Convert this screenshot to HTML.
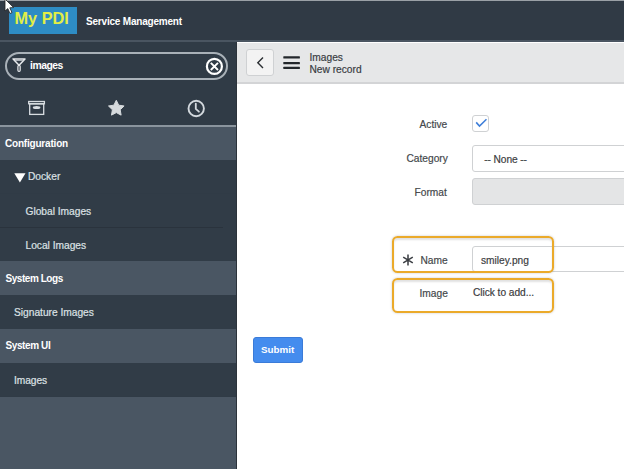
<!DOCTYPE html>
<html><head><meta charset="utf-8">
<style>
*{margin:0;padding:0;box-sizing:border-box}
html,body{width:624px;height:469px;overflow:hidden;background:#fff;font-family:"Liberation Sans",sans-serif}
.abs{position:absolute}
#top{left:0;top:0;width:624px;height:42px;background:#303a45}
#topline{left:0;top:0;width:624px;height:1px;background:#9aa0a6}
#hdrline{left:0;top:40px;width:624px;height:2px;background:#4a5561}
#logo{left:9px;top:7px;width:68px;height:27px;background:#2e8cc4}
#logotxt{left:14.5px;top:7px;font-size:16.3px;font-weight:bold;color:#e2ee45;line-height:22px;white-space:nowrap}
#svc{left:86px;top:15px;font-size:10px;font-weight:bold;color:#fff;line-height:14px;white-space:nowrap;letter-spacing:-0.2px}
#side{left:0;top:42px;width:237px;height:427px;background:#303b46}
#pill{left:5px;top:52px;width:223px;height:28px;border:2px solid #a9b1b8;border-radius:14px}
.srow{left:0;width:236px;height:34px}
.hdr{background:#4a5663;color:#fff;font-weight:bold;font-size:10px}
.mod{background:#313c47;color:#dde1e5;font-size:10.2px;-webkit-text-stroke:0.2px #dde1e5}
.t{position:absolute;white-space:nowrap;line-height:12px}
#sidebottom{left:0;top:396.5px;width:236px;height:73px;background:#4a5663}
#sideborder{left:235.5px;top:42px;width:1.5px;height:427px;background:#2c333b}
#main{left:237px;top:42px;width:387px;height:427px;background:#fff}
#mhdr{left:237px;top:42.5px;width:387px;height:41.3px;background:#e6e7e8;border-bottom:2px solid #d3d4d6}
#back{left:246px;top:49px;width:27.5px;height:26.5px;background:#f3f3f3;border:1px solid #cfd1d3;border-radius:3px}
.lbl{position:absolute;white-space:nowrap;color:#3c3f44;font-size:10.2px;line-height:12px;-webkit-text-stroke:0.2px #55595e}
.box{position:absolute;border:1px solid #cfd1d3;border-radius:3px;background:#fff}
.orange{position:absolute;border:2.8px solid #ebaa2a;border-radius:5.5px;box-shadow:0 0 2.5px rgba(0,0,0,.22), inset 0 2px 2px rgba(0,0,0,.12)}
#submit{left:253px;top:337px;width:50px;height:26px;background:#448cee;border:1px solid #3a7bd8;border-radius:3px}
</style></head><body>
<div class="abs" id="top"></div>
<div class="abs" id="topline"></div>
<div class="abs" id="hdrline"></div>
<div class="abs" id="logo"></div>
<div class="abs" id="logotxt">My PDI</div>
<div class="abs" id="svc">Service Management</div>

<div class="abs" id="side"></div>
<div class="abs" id="pill"></div>
<svg class="abs" style="left:8px;top:54px" width="22" height="22" viewBox="0 0 22 22">
  <path d="M5.1 4.9 H17 L11.05 11.3 Z" fill="none" stroke="#e6e9ec" stroke-width="1.5" stroke-linejoin="round"/>
  <path d="M6.8 6.3 H15.4" stroke="#c9ced3" stroke-width="1"/>
  <rect x="9.9" y="11.4" width="2.3" height="5.9" rx="1.1" fill="none" stroke="#e6e9ec" stroke-width="1.2"/>
</svg>
<div class="abs t" style="left:30px;top:60px;font-size:10.4px;color:#fff;font-weight:bold;letter-spacing:-0.5px">images</div>
<svg class="abs" style="left:204px;top:56px" width="21" height="21" viewBox="0 0 21 21">
  <circle cx="10.4" cy="10.4" r="7.5" fill="none" stroke="#fff" stroke-width="2.2"/>
  <path d="M6.8 6.8 L14 14 M14 6.8 L6.8 14" stroke="#fff" stroke-width="1.9"/>
</svg>
<!-- tab icons -->
<svg class="abs" style="left:27px;top:99px" width="20" height="18" viewBox="0 0 20 18">
  <rect x="1.7" y="2.5" width="15.7" height="2.3" fill="none" stroke="#d8dde1" stroke-width="1.3"/>
  <rect x="2.7" y="4.8" width="14" height="10.6" fill="none" stroke="#d8dde1" stroke-width="1.3"/>
  <ellipse cx="9.6" cy="8.6" rx="3.8" ry="1.5" fill="#d8dde1"/>
</svg>
<svg class="abs" style="left:107px;top:99px" width="19" height="19" viewBox="0 0 19 19">
  <path d="M9.30 1.30 L11.71 6.18 L17.10 6.97 L13.20 10.77 L14.12 16.13 L9.30 13.60 L4.48 16.13 L5.40 10.77 L1.50 6.97 L6.89 6.18 Z" fill="#d6dadd" stroke="#d6dadd" stroke-width="1" stroke-linejoin="round"/>
</svg>
<svg class="abs" style="left:186px;top:98px" width="20" height="20" viewBox="0 0 20 20">
  <circle cx="10.2" cy="10.5" r="7.7" fill="none" stroke="#d3d9de" stroke-width="1.9"/>
  <path d="M9.8 5.6 V10.9 L12.9 13.7" fill="none" stroke="#d3d9de" stroke-width="1.8" stroke-linecap="round"/>
</svg>
<div class="abs" style="left:0;top:125px;width:236px;height:2px;background:#8a949d"></div>

<div class="abs srow hdr" style="top:127px;height:32.60px"><span class="t" style="left:5px;top:11.1px;letter-spacing:-0.2px">Configuration</span></div>
<div class="abs srow mod" style="top:159.6px;height:33.90px"><svg class="abs" style="left:13.5px;top:13.4px" width="12" height="10" viewBox="0 0 12 10"><path d="M0.3 0.3 H11.5 L5.9 9.5 Z" fill="#fff"/></svg><span class="t" style="left:28px;top:11.7px;letter-spacing:0px">Docker</span></div>
<div class="abs srow mod" style="top:193.5px;height:33.90px"><span class="t" style="left:25.5px;top:12.4px;letter-spacing:0px">Global Images</span></div>
<div class="abs srow mod" style="top:227.4px;height:33.90px"><span class="t" style="left:25.5px;top:12.3px;letter-spacing:0px">Local Images</span></div>
<div class="abs srow hdr" style="top:261.3px;height:33.50px"><span class="t" style="left:5.5px;top:11.8px;letter-spacing:-0.45px">System Logs</span></div>
<div class="abs srow mod" style="top:294.8px;height:33.80px"><span class="t" style="left:14px;top:12.2px;letter-spacing:0px">Signature Images</span></div>
<div class="abs srow hdr" style="top:328.6px;height:34.20px"><span class="t" style="left:5.5px;top:11.6px;letter-spacing:-0.4px">System UI</span></div>
<div class="abs srow mod" style="top:362.8px;height:33.70px"><span class="t" style="left:14px;top:12.2px;letter-spacing:-0.05px">Images</span></div>
<div class="abs" id="sidebottom"></div>
<div class="abs" style="left:0;top:226.5px;width:223px;height:1px;background:#2a333d"></div>
<div class="abs" id="sideborder"></div>

<div class="abs" id="main"></div>
<div class="abs" id="mhdr"></div>
<div class="abs" id="back"></div>
<svg class="abs" style="left:254px;top:56px" width="14" height="14" viewBox="0 0 14 14"><path d="M9 1.4 L3.8 6.7 L9 12" fill="none" stroke="#2b2f33" stroke-width="1.4"/></svg>
<svg class="abs" style="left:283px;top:55px" width="18" height="15" viewBox="0 0 18 15">
  <rect x="0.3" y="1.2" width="16.6" height="2.4" rx="0.6" fill="#23272b"/>
  <rect x="0.3" y="6.9" width="16.6" height="2.4" rx="0.6" fill="#23272b"/>
  <rect x="0.3" y="11.7" width="16.6" height="2.4" rx="0.6" fill="#23272b"/>
</svg>
<div class="abs lbl" style="left:309.5px;top:51.8px;color:#2f3236">Images</div>
<div class="abs lbl" style="left:309.5px;top:63.5px;color:#2f3236">New record</div>

<div class="abs lbl" style="left:419.5px;top:119.3px">Active</div>
<div class="abs box" style="left:472px;top:115px;width:17px;height:17px"></div>
<svg class="abs" style="left:474px;top:117px" width="13" height="13" viewBox="0 0 13 13"><path d="M2.2 5.4 L5.5 9 L12.5 2.2" fill="none" stroke="#3f7fd9" stroke-width="1.6"/></svg>

<div class="abs lbl" style="left:406.5px;top:153px">Category</div>
<div class="abs box" style="left:472px;top:145px;width:170px;height:27px"></div>
<div class="abs lbl" style="left:484.3px;top:153.5px;color:#333;letter-spacing:-0.1px">-- None --</div>

<div class="abs lbl" style="left:414.5px;top:187px">Format</div>
<div class="abs box" style="left:472px;top:178px;width:170px;height:27px;background:#e4e5e6"></div>

<div class="abs box" style="left:472px;top:246.3px;width:170px;height:26.2px"></div>
<div class="abs orange" style="left:392px;top:236.3px;width:161.7px;height:36.5px"></div>
<svg class="abs" style="left:402px;top:254px" width="12" height="12" viewBox="0 0 12 12"><path d="M6 0.5 V11.5 M1.2 3.2 L10.8 8.8 M10.8 3.2 L1.2 8.8" stroke="#3a3d42" stroke-width="1.5"/></svg>
<div class="abs lbl" style="left:420.5px;top:254.8px">Name</div>
<div class="abs lbl" style="left:481px;top:254.6px;color:#333">smiley.png</div>

<div class="abs orange" style="left:392px;top:278px;width:161.7px;height:35.2px"></div>
<div class="abs lbl" style="left:419.5px;top:288px">Image</div>
<div class="abs lbl" style="left:473px;top:287px;color:#333;letter-spacing:-0.05px">Click to add...</div>

<div class="abs" id="submit"></div>
<div class="abs t" style="left:261px;top:344px;color:#fff;font-weight:bold;font-size:9.8px">Submit</div>

<!-- cursor -->
<svg class="abs" style="left:4px;top:0px" width="12" height="15" viewBox="0 0 12 15">
  <path d="M1 -1 L1 11 L3.8 8.6 L6 13.5 L8 12.6 L5.8 7.8 L9.6 7.6 Z" fill="#fff" stroke="#222" stroke-width="0.8"/>
</svg>
</body></html>
